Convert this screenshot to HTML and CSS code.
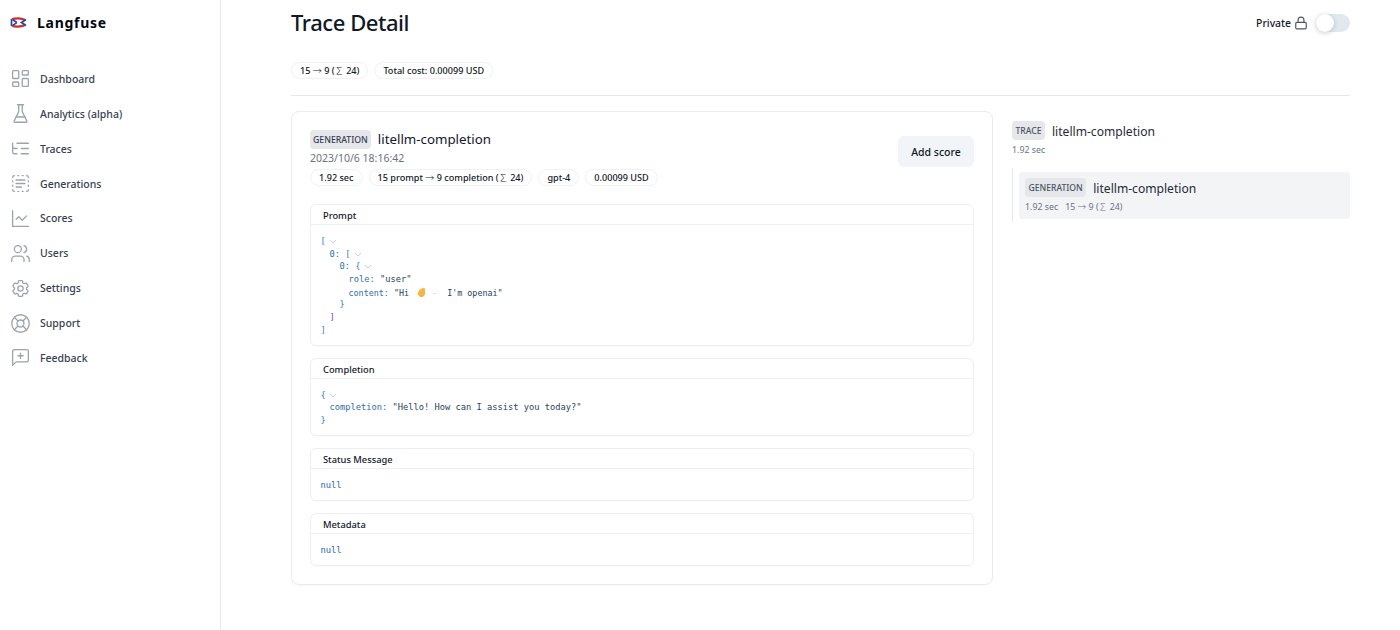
FILE: index.html
```html
<!DOCTYPE html>
<html lang="en">
<head>
<meta charset="utf-8">
<title>Trace Detail</title>
<link rel="stylesheet" href="styles.css">
</head>
<body>
<div class="app">
  <aside class="sidebar">
    <div class="brand">
      <svg class="logo" viewBox="0 0 17 11"><path d="M2 2.5C5 1 11 1 15 3M2 8.5C5 10 11 10 15 8" fill="none" stroke="#cf2c30" stroke-width="2.2"/><path d="M1.5 2v7M3 3c2 1 3 2 4 2.5M3 8c2-1 3-2 4-2.5" fill="none" stroke="#24489e" stroke-width="1.7"/><path d="M16 2.5 11.5 5.5l4.500 3" fill="none" stroke="#24489e" stroke-width="1.8"/></svg>
      <span class="brand-name">Langfuse</span>
    </div>
    <nav class="nav">
      <a class="nav-item"><svg class="icon" viewBox="0 0 24 24"><rect width="7" height="9" x="3" y="3" rx="1"/><rect width="7" height="5" x="14" y="3" rx="1"/><rect width="7" height="9" x="14" y="12" rx="1"/><rect width="7" height="5" x="3" y="16" rx="1"/></svg>Dashboard</a>
      <a class="nav-item"><svg class="icon" viewBox="0 0 24 24"><path d="M10 2v7.527a2 2 0 0 1-.211.896L4.72 20.55a1 1 0 0 0 .9 1.45h12.76a1 1 0 0 0 .9-1.45l-5.069-10.127A2 2 0 0 1 14 9.527V2"/><path d="M8.5 2h7"/><path d="M7 16h10"/></svg>Analytics (alpha)</a>
      <a class="nav-item"><svg class="icon" viewBox="0 0 24 24"><path d="M21 12h-8"/><path d="M21 6H8"/><path d="M21 18h-8"/><path d="M3 6v4c0 1.1.9 2 2 2h3"/><path d="M3 10v6c0 1.1.9 2 2 2h3"/></svg>Traces</a>
      <a class="nav-item"><svg class="icon" viewBox="0 0 24 24"><path d="M5 3a2 2 0 0 0-2 2"/><path d="M19 3a2 2 0 0 1 2 2"/><path d="M21 19a2 2 0 0 1-2 2"/><path d="M5 21a2 2 0 0 1-2-2"/><path d="M9 3h1"/><path d="M9 21h1"/><path d="M14 3h1"/><path d="M14 21h1"/><path d="M3 9v1"/><path d="M21 9v1"/><path d="M3 14v1"/><path d="M21 14v1"/><path d="M7 8h10"/><path d="M7 12h10"/><path d="M7 16h6"/></svg>Generations</a>
      <a class="nav-item"><svg class="icon" viewBox="0 0 24 24"><path d="M3 3v18h18"/><path d="m19 9-5 5-4-4-3 3"/></svg>Scores</a>
      <a class="nav-item"><svg class="icon" viewBox="0 0 24 24"><path d="M16 21v-2a4 4 0 0 0-4-4H6a4 4 0 0 0-4 4v2"/><circle cx="9" cy="7" r="4"/><path d="M22 21v-2a4 4 0 0 0-3-3.87"/><path d="M16 3.13a4 4 0 0 1 0 7.75"/></svg>Users</a>
      <a class="nav-item"><svg class="icon" viewBox="0 0 24 24"><path d="M9.594 3.94c.09-.542.56-.94 1.11-.94h2.593c.55 0 1.02.398 1.11.94l.213 1.281c.063.374.313.686.645.87.074.04.147.083.22.127.324.196.72.257 1.075.124l1.217-.456a1.125 1.125 0 011.37.49l1.296 2.247a1.125 1.125 0 01-.26 1.431l-1.003.827c-.293.24-.438.613-.431.992a6.759 6.759 0 010 .255c-.007.378.138.75.43.99l1.005.828c.424.35.534.954.26 1.43l-1.298 2.247a1.125 1.125 0 01-1.369.491l-1.217-.456c-.355-.133-.75-.072-1.076.124a6.57 6.57 0 01-.22.128c-.331.183-.581.495-.644.869l-.213 1.28c-.09.543-.56.941-1.11.941h-2.594c-.55 0-1.02-.398-1.11-.94l-.213-1.281c-.062-.374-.312-.686-.644-.87a6.52 6.52 0 01-.22-.127c-.325-.196-.72-.257-1.076-.124l-1.217.456a1.125 1.125 0 01-1.369-.49l-1.297-2.247a1.125 1.125 0 01.26-1.431l1.004-.827c.292-.24.437-.613.43-.992a6.932 6.932 0 010-.255c.007-.378-.138-.75-.43-.99l-1.004-.828a1.125 1.125 0 01-.26-1.43l1.297-2.247a1.125 1.125 0 011.37-.491l1.216.456c.356.133.751.072 1.076-.124.072-.044.146-.087.22-.128.332-.183.582-.495.644-.869l.214-1.281z"/><path d="M15 12a3 3 0 11-6 0 3 3 0 016 0z"/></svg>Settings</a>
      <a class="nav-item"><svg class="icon" viewBox="0 0 24 24"><circle cx="12" cy="12" r="10"/><circle cx="12" cy="12" r="4"/><path d="m4.93 4.93 4.24 4.24"/><path d="m14.83 9.17 4.24-4.24"/><path d="m14.83 14.83 4.24 4.24"/><path d="m9.17 14.83-4.24 4.24"/></svg>Support</a>
      <a class="nav-item"><svg class="icon" viewBox="0 0 24 24"><path d="M21 15a2 2 0 0 1-2 2H7l-4 4V5a2 2 0 0 1 2-2h14a2 2 0 0 1 2 2z"/><path d="M12 7v6"/><path d="M9 10h6"/></svg>Feedback</a>
    </nav>
  </aside>
  <main class="main">
    <header class="page-head">
      <h1 class="title">Trace Detail</h1>
      <div class="private">
        <span>Private</span>
        <svg class="lock" viewBox="0 0 24 24"><rect x="3" y="11" width="18" height="11" rx="2"/><path d="M7 11V7a5 5 0 0 1 10 0v4"/></svg>
        <span class="toggle"><span class="knob"></span></span>
      </div>
    </header>
    <div class="chips top-chips">
      <span class="chip">15 <span class="sym">→</span> 9 (<span class="sym">∑</span> 24)</span>
      <span class="chip">Total cost: 0.00099 USD</span>
    </div>
    <div class="columns">
      <section class="card">
        <div class="card-head">
          <div>
            <div class="obs-title"><span class="tag">GENERATION</span><span class="obs-name">litellm-completion</span></div>
            <div class="date">2023/10/6 18:16:42</div>
            <div class="chips inner-chips">
              <span class="chip">1.92 sec</span>
              <span class="chip">15 prompt <span class="sym">→</span> 9 completion (<span class="sym">∑</span> 24)</span>
              <span class="chip">gpt-4</span>
              <span class="chip">0.00099 USD</span>
            </div>
          </div>
          <button class="btn">Add score</button>
        </div>
        <div class="panel">
          <div class="panel-head">Prompt</div>
          <div class="json">
            <div class="ln"><span class="b1">[</span><svg class="car" viewBox="0 0 8 8"><path d="M1 3l3 3 3-3"/></svg></div>
            <div class="ln i1"><span class="key">0:</span> <span class="b1">[</span><svg class="car" viewBox="0 0 8 8"><path d="M1 3l3 3 3-3"/></svg></div>
            <div class="ln i2"><span class="key">0:</span> <span class="b1">{</span><svg class="car" viewBox="0 0 8 8"><path d="M1 3l3 3 3-3"/></svg></div>
            <div class="ln i3"><span class="key">role:</span> <span class="str">"user"</span></div>
            <div class="ln i3 tight"><span class="key">content:</span> <span class="str">"Hi <svg class="wave" viewBox="0 0 12 12"><path d="M3 6.5 5 3l1 .4L7 2l1 .6.8-1 .9.7.5 3.4-.4 3.3L7.5 11H5.2L2.6 8.6z" fill="#f5b53f"/></svg><span class="dash">-</span> I'm openai"</span></div>
            <div class="ln i2"><span class="b1">}</span></div>
            <div class="ln i1"><span class="b2">]</span></div>
            <div class="ln"><span class="b1">]</span></div>
          </div>
        </div>
        <div class="panel">
          <div class="panel-head">Completion</div>
          <div class="json">
            <div class="ln"><span class="b1">{</span><svg class="car" viewBox="0 0 8 8"><path d="M1 3l3 3 3-3"/></svg></div>
            <div class="ln i1"><span class="key">completion:</span> <span class="str">"Hello! How can I assist you today?"</span></div>
            <div class="ln"><span class="b1">}</span></div>
          </div>
        </div>
        <div class="panel">
          <div class="panel-head">Status Message</div>
          <div class="json"><div class="ln"><span class="null">null</span></div></div>
        </div>
        <div class="panel">
          <div class="panel-head">Metadata</div>
          <div class="json"><div class="ln"><span class="null">null</span></div></div>
        </div>
      </section>
      <aside class="tree">
        <div class="node">
          <div class="obs-title"><span class="tag tag-small">TRACE</span><span class="tree-name">litellm-completion</span></div>
          <div class="meta">1.92 sec</div>
        </div>
        <div class="children">
          <div class="node child">
            <div class="obs-title"><span class="tag tag-small">GENERATION</span><span class="tree-name">litellm-completion</span></div>
            <div class="meta"><span>1.92 sec</span><span>15 <span class="sym">→</span> 9 (<span class="sym">∑</span> 24)</span></div>
          </div>
        </div>
      </aside>
    </div>
  </main>
</div>
</body>
</html>
```
FILE: styles.css
```css
* { box-sizing: border-box; }
html, body { margin: 0; height: 100%; background: #fff; overflow: hidden; }
body { font-family: "Noto Sans", "Open Sans", sans-serif; color: #111827; }
.app { display: flex; height: 630px; }

.sidebar { width: 221px; flex: none; border-right: 1px solid #e5e7eb; padding: 0 10px; }
.brand { display: flex; align-items: center; gap: 10px; height: 46px; }
.logo { width: 17px; height: 11px; margin-top: -1px; flex: none; }
.brand-name { font-size: 14px; font-weight: 700; letter-spacing: .72px; color: #030712; margin-top: -2px; }
.nav { display: flex; flex-direction: column; padding-top: 15.4px; }
.nav-item { display: flex; align-items: center; gap: 9px; height: 34.9px; font-size: 10.5px; font-weight: 500; color: #374151; }
.icon { width: 21px; height: 21px; flex: none; fill: none; stroke: #9ca3af; stroke-width: 1.5; stroke-linecap: round; stroke-linejoin: round; }

.main { flex: 1; min-width: 0; padding: 0 50px 0 70px; }
.page-head { display: flex; justify-content: space-between; align-items: center; height: 46px; }
.title { margin: 0 0 2px; font-size: 22px; font-weight: 500; letter-spacing: -.45px; color: #111827; line-height: 44px; }
.private { display: flex; align-items: center; font-size: 10.4px; font-weight: 500; color: #111827; }
.lock { width: 14px; height: 14px; margin: 0 8.5px 0 2.5px; fill: none; stroke: #4b5563; stroke-width: 2; stroke-linecap: round; stroke-linejoin: round; }
.toggle { display: block; width: 34px; height: 18px; border-radius: 9px; background: #e2e8f0; position: relative; }
.knob { position: absolute; left: 0; top: 0; width: 18px; height: 18px; border-radius: 50%; background: #fff; box-shadow: 0 1px 5px rgba(17,24,39,.22); }

.chips { display: flex; gap: 6px; }
.chip { display: flex; align-items: center; height: 17px; padding: 0 8px; border-radius: 9px; border: 1px solid #f0f1f4; font-size: 9.1px; line-height: 15px; font-weight: 500; color: #111827; white-space: pre; }
.sym { font-family: "Noto Sans CJK SC", sans-serif; font-weight: 300; line-height: 1; }
.top-chips { margin-top: 16px; padding-bottom: 16px; border-bottom: 1px solid #e5e7eb; }

.columns { display: flex; gap: 19px; margin-top: 15px; }
.card { width: 702px; flex: none; height: 474px; border: 1px solid #e9ebef; border-radius: 8px; padding: 18px 18px 0; box-shadow: 0 1px 2px rgba(0,0,0,.03); }
.card-head { display: flex; justify-content: space-between; align-items: flex-start; height: 74px; }
.obs-title { display: flex; align-items: center; gap: 7px; }
.tag { display: block; height: 19px; line-height: 20px; padding: 0 3px; border-radius: 4px; background: #e5e7eb; font-size: 8.7px; font-weight: 500; color: #374151; }
.obs-name { font-size: 13.3px; font-weight: 400; color: #111827; margin-top: -1px; }
.date { font-size: 10.5px; color: #6b7280; line-height: 14px; margin-top: 2px; }
.inner-chips { margin-top: 4px; }
.btn { width: 76px; height: 31px; margin-top: 6px; border: 0; border-radius: 6px; background: #f1f5f9; font: 500 10.5px "Noto Sans", sans-serif; color: #111827; }

.panel { border: 1px solid #eceef1; border-radius: 6px; margin-bottom: 12px; padding-bottom: 4.3px; box-shadow: 0 1px 1px rgba(0,0,0,.02); }
.panel-head { height: 20px; line-height: 21px; padding-left: 12px; font-size: 9.3px; font-weight: 500; color: #111827; border-bottom: 1px solid #eef0f3; }
.json { padding: 10px 9.5px 4px; font-family: "DejaVu Sans Mono", monospace; font-size: 8.72px; line-height: 12.7px; }
.ln { white-space: pre; height: 12.7px; }
.i1 { padding-left: 9px; }
.i2 { padding-left: 19px; }
.i3 { padding-left: 28px; }
.tight { font-size: 8.4px; }
.b1 { color: #2f7fc1; }
.b2 { color: #7c3fc4; }
.key { color: #2a70a8; }
.str { color: #2b3f5c; }
.null { color: #1c64c8; }
.car { width: 8px; height: 8px; margin-left: 3px; vertical-align: -1px; fill: none; stroke: #b6c7d8; stroke-width: .8; }
.wave { width: 12px; height: 12px; vertical-align: -2px; margin: 0 5px 0 1px; }
.dash { color: #c5ccd6; margin-right: 5px; }

.tree { flex: 1; min-width: 0; padding-top: 10px; }
.tree-name { font-size: 12.1px; color: #1f2937; margin-top: 1px; }
.tag-small { font-size: 8.6px; color: #4b5563; padding: 0 3.5px; }
.meta { display: flex; gap: 7px; font-size: 8.8px; color: #6b7280; margin-top: 4px; }
.children { margin-top: 12px; border-left: 1px solid #e5e7eb; padding: 4px 0 3px 6px; }
.child { background: #f3f4f6; border-radius: 3px; height: 47px; padding: 6px 6px; }
```
